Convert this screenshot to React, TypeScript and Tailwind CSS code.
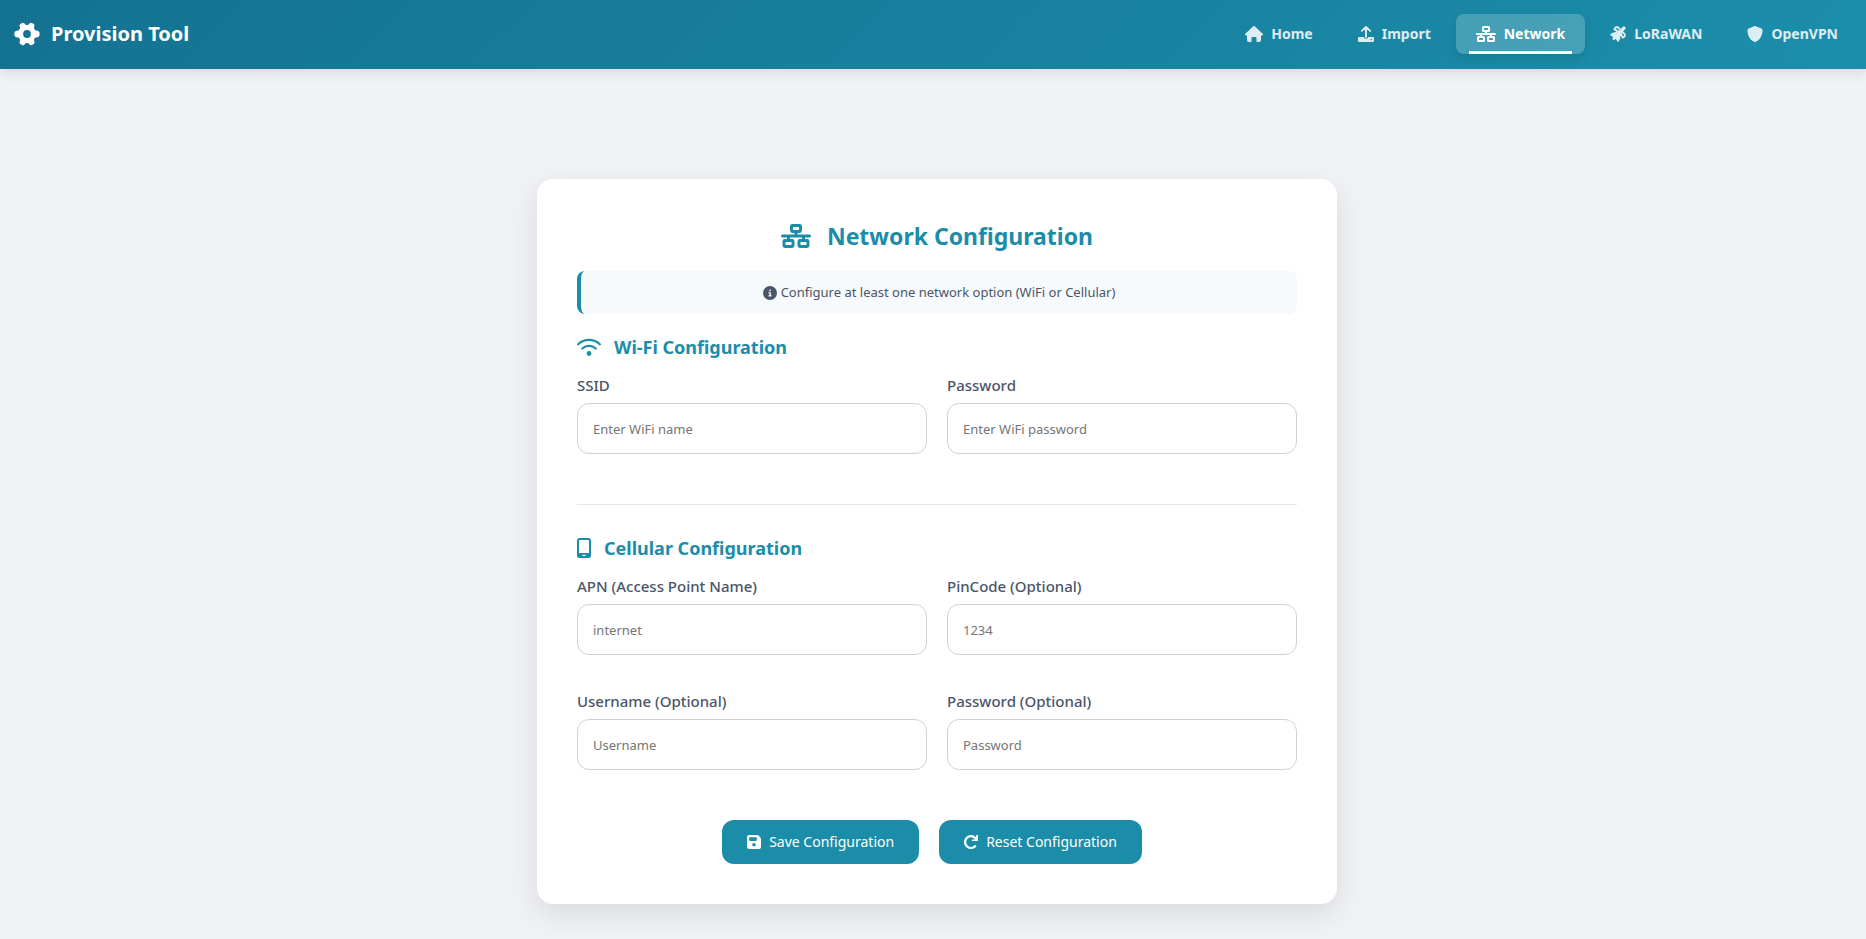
import { useState } from 'react';
import type { ComponentType, FormEvent } from 'react';
import { FaCircleInfo, FaShield } from 'react-icons/fa6';

interface IconProps {
  className?: string;
}

interface NavItem {
  href: string;
  label: string;
  icon: ComponentType<IconProps>;
  iconClass: string;
}

interface FieldProps {
  id: string;
  label: string;
  placeholder: string;
  type?: string;
  value: string;
  onChange: (id: string, value: string) => void;
}

function GearIcon({ className }: IconProps) {
  return (
    <svg viewBox="0 0 26 24" fill="currentColor" className={className} aria-hidden="true">
      <path
        fillRule="evenodd"
        d="M6.2 2.1 8.2.9Q9.4.3 10.3 1.3L11.6 2.7Q13 3.2 14.4 2.7L15.7 1.3Q16.6.3 17.8.9L19.8 2.1Q20.8 2.9 20.4 4.2L19.9 6.1Q20.3 7.6 21.6 8.4L23.5 8.8Q25.4 9.3 25.6 11V13Q25.4 14.7 23.5 15.2L21.6 15.6Q20.3 16.4 19.9 17.9L20.4 19.8Q20.8 21.1 19.8 21.9L17.8 23.1Q16.6 23.7 15.7 22.7L14.4 21.3Q13 20.8 11.6 21.3L10.3 22.7Q9.4 23.7 8.2 23.1L6.2 21.9Q5.2 21.1 5.6 19.8L6.1 17.9Q5.7 16.4 4.4 15.6L2.5 15.2Q.6 14.7.4 13V11Q.6 9.3 2.5 8.8L4.4 8.4Q5.7 7.6 6.1 6.1L5.6 4.2Q5.2 2.9 6.2 2.1ZM13 8.1A3.9 3.9 0 1 0 13 15.9 3.9 3.9 0 1 0 13 8.1Z"
      />
    </svg>
  );
}

function HouseIcon({ className }: IconProps) {
  return (
    <svg viewBox="0 0 18 16" fill="currentColor" className={className} aria-hidden="true">
      <path d="M8.3.3a1 1 0 0 1 1.4 0l8 7.4c.7.7.2 1.8-.7 1.8h-1V14a2 2 0 0 1-2 2h-2.5v-4a1 1 0 0 0-1-1h-3a1 1 0 0 0-1 1v4H4a2 2 0 0 1-2-2V9.5H1c-.9 0-1.4-1.1-.7-1.8Z" />
    </svg>
  );
}

function UploadIcon({ className }: IconProps) {
  return (
    <svg viewBox="0 0 16 16" fill="currentColor" className={className} aria-hidden="true">
      <path
        d="M3.9 4.9 8 1l4.1 3.9M8 1.3v9.7"
        fill="none"
        stroke="currentColor"
        strokeWidth="1.9"
        strokeLinecap="round"
        strokeLinejoin="round"
      />
      <path
        fillRule="evenodd"
        d="M1.2 11H5.6A2.5 2.5 0 0 0 10.4 11H14.8A1.2 1.2 0 0 1 16 12.2V14.8A1.2 1.2 0 0 1 14.8 16H1.2A1.2 1.2 0 0 1 0 14.8V12.2A1.2 1.2 0 0 1 1.2 11ZM13.3 12.8A.75.75 0 1 0 13.3 14.3.75.75 0 1 0 13.3 12.8Z"
      />
    </svg>
  );
}

function NetworkIcon({ className }: IconProps) {
  return (
    <svg
      viewBox="0 0 20 16"
      fill="none"
      stroke="currentColor"
      strokeWidth="2"
      strokeLinejoin="round"
      strokeLinecap="round"
      className={className}
      aria-hidden="true"
    >
      <rect x="7" y="1" width="6" height="4" rx=".6" />
      <rect x="2" y="11" width="6" height="4" rx=".6" />
      <rect x="12" y="11" width="6" height="4" rx=".6" />
      <path d="M1 8h18M10 5v3M5 8v3M15 8v3" />
    </svg>
  );
}

function SatelliteIcon({ className }: IconProps) {
  return (
    <svg viewBox="0 0 16 16" fill="currentColor" className={className} aria-hidden="true">
      <path
        fill="none"
        stroke="currentColor"
        strokeWidth="1.8"
        strokeLinejoin="round"
        d="M7.3 4.9 4.3 3.4 5.5 1.3 7.8 1 10 3.4M12.3 6.2 14.9 8.3 14.6 10.5 12.6 11.6 11.1 8.7"
      />
      <path d="M13.2.5a1 1 0 0 1 1.4 0l.9.9a1 1 0 0 1 0 1.4L11.7 7.2 12 8.7 9.9 11 10.4 12.6 8.4 15.7Q7.9 16.2 7.4 15.6L5.7 12.7 4 14.6 2.1 12.8 3.2 11 .4 9.2Q-.1 8.7.5 8.2L3.7 6.2 5.1 6.5 7.2 4.2 9 4.5Z" />
    </svg>
  );
}

function WifiIcon({ className }: IconProps) {
  return (
    <svg viewBox="0 0 24 18" fill="currentColor" className={className} aria-hidden="true">
      <path
        d="M1.2 6.3a15.6 15.6 0 0 1 21.6 0M5.3 10.5a9.8 9.8 0 0 1 13.4 0"
        fill="none"
        stroke="currentColor"
        strokeWidth="2.2"
        strokeLinecap="round"
      />
      <circle cx="12" cy="15.5" r="2.4" />
    </svg>
  );
}

function MobileIcon({ className }: IconProps) {
  return (
    <svg viewBox="0 0 14 20" fill="currentColor" className={className} aria-hidden="true">
      <path
        fillRule="evenodd"
        d="M2.5 0h9A2.5 2.5 0 0 1 14 2.5v15a2.5 2.5 0 0 1-2.5 2.5h-9A2.5 2.5 0 0 1 0 17.5v-15A2.5 2.5 0 0 1 2.5 0ZM2.5 2h9a.5.5 0 0 1 .5.5V15H2V2.5a.5.5 0 0 1 .5-.5ZM6 16.7a.7.7 0 0 0 0 1.4h2a.7.7 0 0 0 0-1.4Z"
      />
    </svg>
  );
}

function SaveIcon({ className }: IconProps) {
  return (
    <svg viewBox="0 0 14 14" fill="currentColor" className={className} aria-hidden="true">
      <path
        fillRule="evenodd"
        d="M2 0h8.2a2 2 0 0 1 1.4.6l1.8 1.8a2 2 0 0 1 .6 1.4V12a2 2 0 0 1-2 2H2a2 2 0 0 1-2-2V2a2 2 0 0 1 2-2ZM3 2.3a.8.8 0 0 0-.8.8v2a.8.8 0 0 0 .8.8h6a.8.8 0 0 0 .8-.8v-2a.8.8 0 0 0-.8-.8ZM7 8a1.8 1.8 0 1 0 0 3.6A1.8 1.8 0 1 0 7 8Z"
      />
    </svg>
  );
}

function ResetIcon({ className }: IconProps) {
  return (
    <svg viewBox="0 0 14 14" fill="currentColor" className={className} aria-hidden="true">
      <path
        d="M11.2 11.2A5.9 5.9 0 1 1 11.2 3L12.4 4.4"
        fill="none"
        stroke="currentColor"
        strokeWidth="2.2"
        strokeLinecap="round"
      />
      <path d="M12.2.3a.9.9 0 0 1 1.8.2v4.7a.9.9 0 0 1-.9.9H8.5a.9.9 0 0 1-.2-1.7h3.9Z" />
    </svg>
  );
}

const navItems: NavItem[] = [
  { href: '#home', label: 'Home', icon: HouseIcon, iconClass: 'h-4 w-[18px]' },
  { href: '#import', label: 'Import', icon: UploadIcon, iconClass: 'size-4' },
  { href: '#network', label: 'Network', icon: NetworkIcon, iconClass: 'h-4 w-5' },
  { href: '#lorawan', label: 'LoRaWAN', icon: SatelliteIcon, iconClass: 'size-4' },
  { href: '#openvpn', label: 'OpenVPN', icon: FaShield, iconClass: 'size-4' },
];

const wifiFields = [
  { id: 'ssid', label: 'SSID', placeholder: 'Enter WiFi name' },
  { id: 'wifiPassword', label: 'Password', placeholder: 'Enter WiFi password', type: 'password' },
];

const cellularFields = [
  { id: 'apn', label: 'APN (Access Point Name)', placeholder: 'internet' },
  { id: 'pincode', label: 'PinCode (Optional)', placeholder: '1234' },
  { id: 'username', label: 'Username (Optional)', placeholder: 'Username' },
  { id: 'cellPassword', label: 'Password (Optional)', placeholder: 'Password', type: 'password' },
];

function Header({ active }: { active: string }) {
  return (
    <header className="relative flex items-center justify-between bg-linear-135 from-[#147291] to-[#1b8eab] pt-3.5 pr-2 pb-[15px] pl-3.5 shadow-[0_4px_12px_rgba(0,0,0,0.1)]">
      <a href="#home" className="flex items-center gap-[11px] text-xl font-bold text-white">
        <GearIcon className="h-6 w-[26px]" />
        Provision Tool
      </a>

      <nav className="flex items-center gap-[5px]">
        {navItems.map((item) => (
          <a
            key={item.href}
            href={item.href}
            className={`relative flex h-10 items-center gap-2 rounded-lg px-5 text-sm font-bold ${
              item.href === active
                ? 'bg-white/20 text-white shadow-[0_4px_8px_rgba(0,0,0,0.1)]'
                : 'text-white/85 hover:bg-white/10 hover:text-white'
            }`}
          >
            <item.icon className={item.iconClass} />
            {item.label}
            {item.href === active && (
              <span className="absolute inset-x-[10%] bottom-0 h-[3px] bg-white" />
            )}
          </a>
        ))}
      </nav>
    </header>
  );
}

function Field({ id, label, placeholder, type = 'text', value, onChange }: FieldProps) {
  return (
    <div>
      <label htmlFor={id} className="mb-[7px] block text-[15px] leading-[22px] font-medium text-[#4a5568]">
        {label}
      </label>
      <input
        id={id}
        type={type}
        value={value}
        placeholder={placeholder}
        onChange={(e) => onChange(id, e.target.value)}
        className="h-[51px] w-full rounded-xl border border-[#d1d1db] bg-white px-[15px] text-[13px] text-gray-800 outline-none placeholder:text-[#757575] focus:border-[#1b8da9]"
      />
    </div>
  );
}

export default function App() {
  const [values, setValues] = useState<Record<string, string>>({});

  const handleChange = (id: string, value: string) => {
    setValues((prev) => ({ ...prev, [id]: value }));
  };

  const handleSubmit = (e: FormEvent) => {
    e.preventDefault();
  };

  return (
    <div className="min-h-screen bg-[#f0f2f5] font-['Noto_Sans',sans-serif]">
      <Header active="#network" />

      <main className="pt-[110px] pb-[35px] pl-2">
        <form
          onSubmit={handleSubmit}
          onReset={() => setValues({})}
          className="mx-auto max-w-[800px] rounded-2xl bg-white p-10 shadow-[0_10px_30px_rgba(0,0,0,0.1)]"
        >
          <h1 className="mb-[18px] flex items-center justify-center gap-4 text-[23px] leading-[34px] font-bold text-[#1b8da9]">
            <NetworkIcon className="h-6 w-[30px]" />
            Network Configuration
          </h1>

          <p className="flex h-[43px] items-center justify-center gap-1 rounded-lg border-l-4 border-[#1b8da9] bg-[#f6fafd] text-[13px] text-[#4a5568]">
            <FaCircleInfo className="size-3.5" />
            Configure at least one network option (WiFi or Cellular)
          </p>

          {/* Wi-Fi */}
          <section className="pt-5">
            <h2 className="mb-3.5 flex items-center gap-[13px] text-lg leading-[26px] font-bold text-[#1b8da9]">
              <WifiIcon className="h-[18px] w-6" />
              Wi-Fi Configuration
            </h2>
            <div className="grid grid-cols-2 gap-x-5 gap-y-[35px]">
              {wifiFields.map((field) => (
                <Field key={field.id} {...field} value={values[field.id] ?? ''} onChange={handleChange} />
              ))}
            </div>
          </section>

          {/* Cellular */}
          <section className="mt-[50px] border-t border-[#e2e8f0] pt-[30px]">
            <h2 className="mb-3.5 flex items-center gap-[13px] text-lg leading-[26px] font-bold text-[#1b8da9]">
              <MobileIcon className="h-5 w-3.5" />
              Cellular Configuration
            </h2>
            <div className="grid grid-cols-2 gap-x-5 gap-y-[35px]">
              {cellularFields.map((field) => (
                <Field key={field.id} {...field} value={values[field.id] ?? ''} onChange={handleChange} />
              ))}
            </div>
          </section>

          <div className="mt-[50px] flex justify-center gap-5 pr-2.5">
            <button
              type="submit"
              className="flex h-11 items-center gap-2 rounded-xl bg-[#1b8da9] px-[25px] text-sm text-white hover:bg-[#147291]"
            >
              <SaveIcon className="size-3.5" />
              Save Configuration
            </button>
            <button
              type="reset"
              className="flex h-11 items-center gap-2 rounded-xl bg-[#1b8da9] px-[25px] text-sm text-white hover:bg-[#147291]"
            >
              <ResetIcon className="size-3.5" />
              Reset Configuration
            </button>
          </div>
        </form>
      </main>
    </div>
  );
}
